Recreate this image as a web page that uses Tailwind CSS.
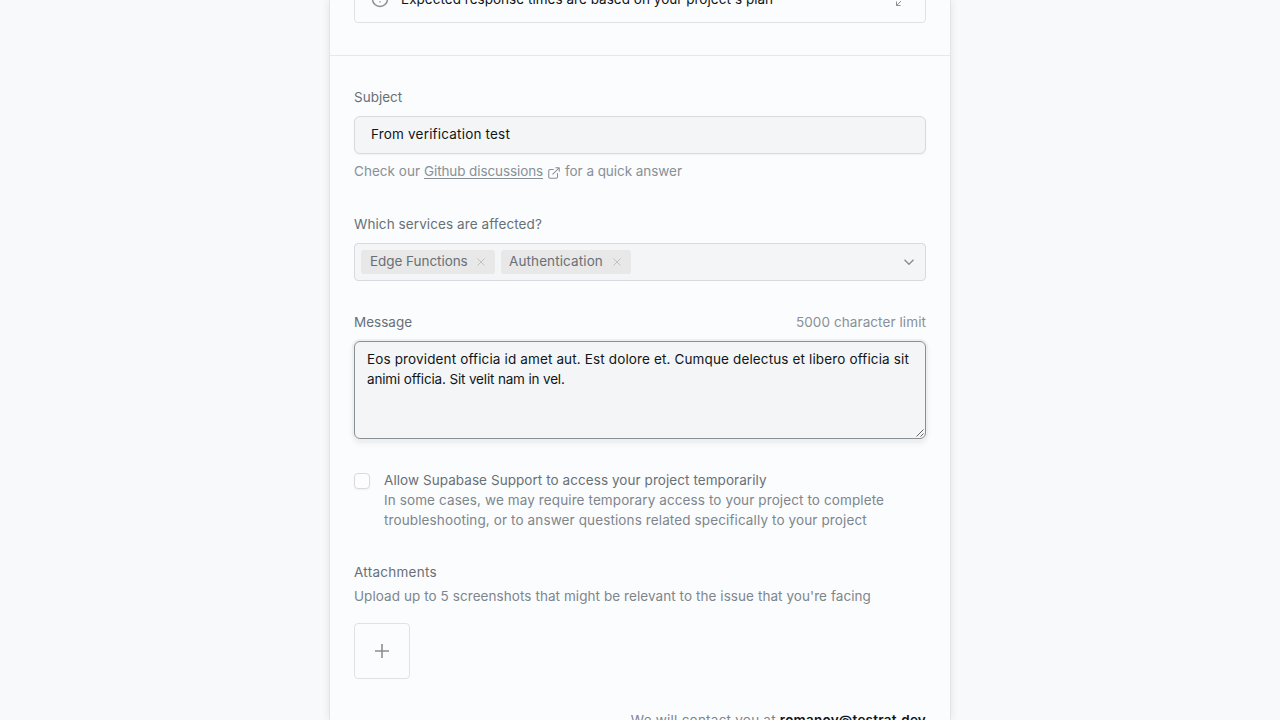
<!DOCTYPE html>
<html lang="en">
<head>
<meta charset="utf-8">
<title>Support request</title>
<script src="https://cdn.jsdelivr.net/npm/@tailwindcss/browser@4"></script>
</head>
<body class="h-screen overflow-hidden bg-[#f8f9fb] font-['Inter',sans-serif] text-[13.5px] leading-5 text-[#687076]">
<main class="mx-auto flex h-screen w-[622px] flex-col overflow-hidden border-x border-[#e3e5e8] bg-[#fbfcfe] shadow-[0_0_8px_rgba(0,0,0,0.09)]">
  <section class="h-14 shrink-0 border-b border-[#e6e8eb] px-6">
    <div class="-mt-[23px] flex h-[46px] items-center rounded border border-[#dfe3e6] pr-[17px] pl-4">
      <svg class="size-[18px]" viewBox="0 0 18 18" fill="none" stroke="#889096" stroke-width="1.5" stroke-linecap="round"><circle cx="9" cy="8" r="7.5"/><path d="M9 4.700v3.600M9 10.700v.1"/></svg>
      <span class="-mt-0.5 ml-3 tracking-[0.025px] text-[#0f1619]">Expected response times are based on your project's plan</span>
      <svg class="mr-px ml-auto size-3" viewBox="0 0 12 12" fill="none" stroke="#889096" stroke-width="1"><path d="M7 1h4v4M11 1 7 5M1.500 7.500v4h4M1.500 11.500l4.500-4.500"/></svg>
    </div>
  </section>

  <section class="flex shrink-0 flex-col px-6 pt-[31px]">
    <label>Subject</label>
    <div class="mt-[9px] flex h-[38px] items-center rounded-md border border-[#d7dbdf] bg-[#f4f5f7] px-4 pb-0.5 tracking-[0.19px] text-[#0f1619] shadow-xs">From verification test</div>
    <p class="mt-[7px] flex items-center text-[#889096]"><span class="w-[70px] whitespace-pre tracking-[0.04px]">Check our </span><a class="w-[119px] tracking-[-0.1px] whitespace-nowrap underline underline-offset-2">Github discussions</a><svg class="mt-[3px] mr-1 ml-1 size-[14px]" viewBox="0 0 24 24" fill="none" stroke="currentColor" stroke-width="1.8" stroke-linecap="round" stroke-linejoin="round"><path d="M18 13v6a2 2 0 0 1-2 2H5a2 2 0 0 1-2-2V8a2 2 0 0 1 2-2h6M15 3h6v6M10 14 21 3"/></svg><span class="tracking-[-0.05px]">for a quick answer</span></p>

    <label class="mt-[33px] tracking-[0.09px]">Which services are affected?</label>
    <div class="mt-[9px] flex h-[38px] items-center gap-1.5 rounded border border-[#d7dbdf] bg-[#f4f5f7] px-1.5">
      <span class="flex h-6 w-[134px] items-center justify-between rounded-[3px] bg-[#e8e8e8] pr-[9px] pl-[9px] whitespace-nowrap"><span class="-mt-0.5 tracking-[-0.05px]">Edge Functions</span><svg class="size-[10px]" viewBox="0 0 10 10" stroke="#b9bdc1" stroke-width=".9"><path d="m1.500 1.500 7 7M8.500 1.500l-7 7"/></svg></span>
      <span class="flex h-6 w-[130px] items-center justify-between rounded-[3px] bg-[#e8e8e8] pr-[9px] pl-2 whitespace-nowrap"><span class="-mt-0.5 tracking-[0.11px]">Authentication</span><svg class="size-[10px]" viewBox="0 0 10 10" stroke="#b9bdc1" stroke-width=".9"><path d="m1.500 1.500 7 7M8.500 1.500l-7 7"/></svg></span>
      <svg class="mr-[5px] ml-auto size-[10px]" viewBox="0 0 10 10" fill="none" stroke="#889096" stroke-width="1.4"><path d="m.5 2.800 4.500 4.500L9.500 2.800"/></svg>
    </div>

    <div class="mt-[31px] flex justify-between"><label>Message</label><span class="tracking-[0.09px] text-[#889096]">5000 character limit</span></div>
    <div class="relative mt-[9px] h-[98px] rounded-md border border-[#889096] bg-[#f4f5f7] px-3 py-[7px] whitespace-nowrap text-[#0f1619] shadow-[0_0_0_2px_#eeeff1,0_3px_6px_rgba(0,0,0,0.10)]"><span class="tracking-[0.137px]">Eos provident officia id amet aut. Est dolore et. Cumque delectus et libero officia sit</span><br><span class="tracking-[-0.16px]">animi officia. Sit velit nam in vel.</span>
      <svg class="absolute right-px bottom-px size-2" viewBox="0 0 8 8" stroke="#555" stroke-width=".9"><path d="M.5 7.500l7-7M4.500 7.500l3-3"/></svg>
    </div>

    <div class="mt-[31px] flex">
      <span class="mt-[3px] size-4 shrink-0 rounded border border-[#d7dbdf] bg-[#fdfdfe] shadow-xs"></span>
      <p class="ml-3.5 whitespace-nowrap text-[#7e868c]"><span class="tracking-[0.065px] text-[#687076]">Allow Supabase Support to access your project temporarily</span><br><span class="tracking-[0.11px]">In some cases, we may require temporary access to your project to complete</span><br><span class="tracking-[0.12px]">troubleshooting, or to answer questions related specifically to your project</span></p>
    </div>

    <label class="mt-8 tracking-[0.27px]">Attachments</label>
    <p class="mt-1 tracking-[0.07px] text-[#7e868c]">Upload up to 5 screenshots that might be relevant to the issue that you're facing</p>
    <button class="mt-[17px] flex size-14 items-center justify-center rounded border border-[#dfe3e6]"><svg class="size-[14px]" viewBox="0 0 14 14" stroke="#8b8f92" stroke-width="1.6"><path d="M7 0v14M0 7h14"/></svg></button>
    <p class="mt-[31px] text-right tracking-[0.23px] whitespace-nowrap text-[#7e868c]">We will contact you at <span class="font-semibold text-[#0f1619]">romanov@testrat.dev</span></p>
  </section>
</main>
</body>
</html>
